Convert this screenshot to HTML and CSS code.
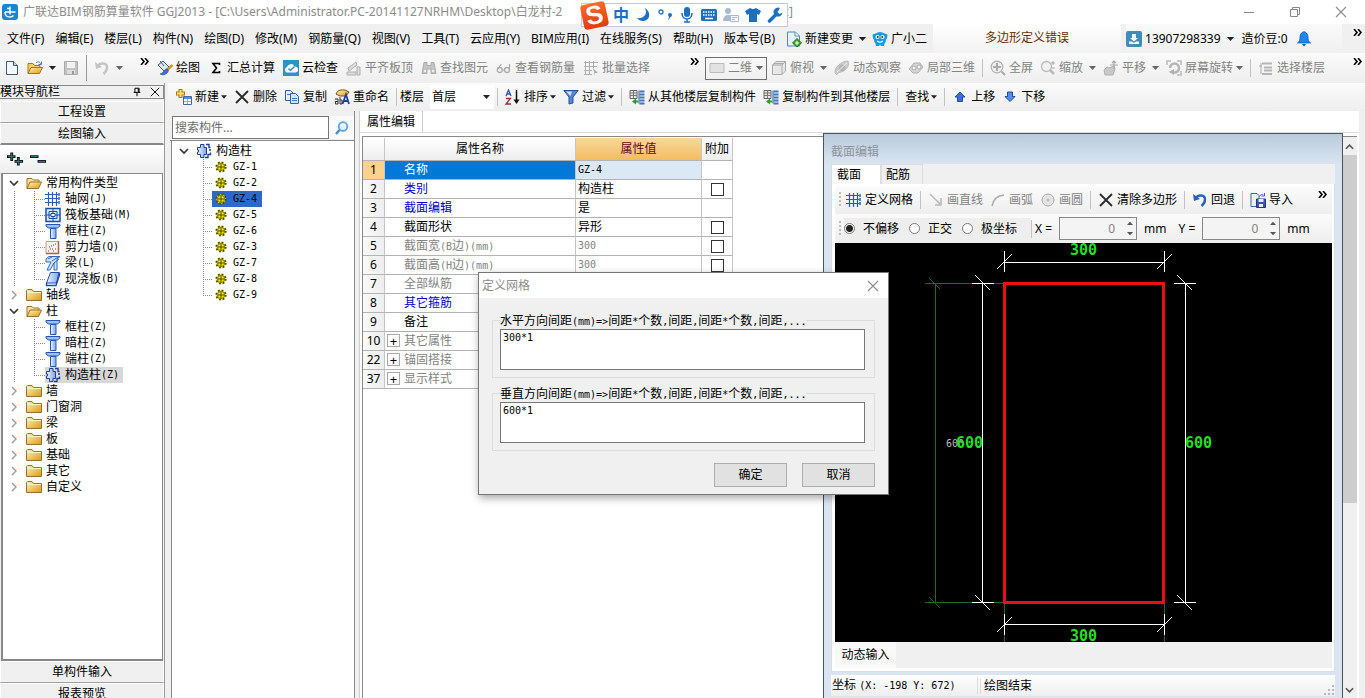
FILE: index.html
```html
<!DOCTYPE html>
<html lang="zh-CN">
<head>
<meta charset="utf-8">
<title>广联达BIM钢筋算量软件 GGJ2013</title>
<link rel="stylesheet" href="styles.css">
</head>
<body>
<svg class="defs" aria-hidden="true">
  <defs>
    <linearGradient id="gold" x1="0" y1="0" x2="1" y2="1"><stop offset="0" stop-color="#fff3b8"/><stop offset="1" stop-color="#dc9a18"/></linearGradient>
    <linearGradient id="steel" x1="0" y1="0" x2="1" y2="0"><stop offset="0" stop-color="#eef5ff"/><stop offset="1" stop-color="#7da4ea"/></linearGradient>
  </defs>
  <symbol id="caret" viewBox="0 0 7 4"><path d="M0 0h7L3.500 4z" fill="currentColor"/></symbol>
  <symbol id="more" viewBox="0 0 9 7"><path d="M1 0l3 3.500-3 3.500M5 0l3 3.500-3 3.500" fill="none" stroke="#000" stroke-width="1.600"/></symbol>
  <symbol id="new" viewBox="0 0 16 16"><path d="M2.500 1.500h7l4 4v9h-11z" fill="#f4f9ff" stroke="#41597c"/><path d="M9.500 1.500v4h4" fill="#c5d6ef" stroke="#41597c"/></symbol>
  <symbol id="open" viewBox="0 0 16 16"><path d="M1 13.500V3.500h5l1.500 2H13V8" fill="#f4cf63" stroke="#a87816"/><path d="M1 13.500L4 7.500h11.500L12.500 13.500z" fill="url(#gold)" stroke="#a87816"/><path d="M9 3c2-2 4-1 5 1M14.500 1.500v3h-3" fill="none" stroke="#4a78b8"/></symbol>
  <symbol id="save" viewBox="0 0 16 16"><path d="M1.500 1.500h13v13h-13z" fill="#c2c2c2" stroke="#aaa"/><path d="M4 2h8v6H4z" fill="#f1f1f1"/><path d="M4 10h8v4H4z" fill="#ddd"/><path d="M9 11h2v3H9z" fill="#999"/></symbol>
  <symbol id="undo" viewBox="0 0 16 16"><path d="M1 2l1 7 6-2z" fill="currentColor"/><path d="M4 6C6 2.500 13 2.500 13 7.500 13 10 12 12 9.500 14" fill="none" stroke="currentColor" stroke-width="2.400"/></symbol>
  <symbol id="paint" viewBox="0 0 16 16"><path d="M1 5l5-4 6 6-5 4z" fill="#dfe8f8" stroke="#41597c"/><path d="M3 1l4 5" stroke="#41597c"/><path d="M15.500 5L9 11" stroke="#c99a22" stroke-width="2.500"/><path d="M10 9c3 1 1 5-4 6l-3-1c4-1 3-4 7-5z" fill="#3f6fd0" stroke="#2a4a92" stroke-width=".6"/></symbol>
  <symbol id="sigma" viewBox="0 0 16 16"><path d="M11.500 5V3.500H5l3.500 4.500L5 12.500h6.500V11" fill="none" stroke="#000" stroke-width="1.600"/></symbol>
  <symbol id="cloud" viewBox="0 0 16 16"><path d="M0 0h16v16H0z" fill="#2f93c8"/><path d="M3.500 12.500a3 3 0 0 1 .5-5.500 4 4 0 0 1 7.500-.5 3 3 0 0 1 1 6z" fill="#fff"/><path d="M5.500 8.500l2 2 4-4" fill="none" stroke="#2f93c8" stroke-width="1.500"/></symbol>
  <symbol id="slab" viewBox="0 0 16 16"><path d="M2 8l8-6 1 3-8 6zM1 12h9v3H1zM11 7h3v8h-3z" fill="#ddd" stroke="#b0b0b0"/></symbol>
  <symbol id="binoc" viewBox="0 0 16 16"><path d="M3 2.500h3v3h4v-3h3l2 11h-5V9H6v4.500H1z" fill="#c4c4c4" stroke="#adadad"/><path d="M3 11h2M11 11h2" stroke="#eee" stroke-width="2"/></symbol>
  <symbol id="glasses" viewBox="0 0 16 16"><circle cx="3.800" cy="10" r="2.500" fill="none" stroke="#aaa" stroke-width="1.300"/><circle cx="11" cy="10" r="2.500" fill="none" stroke="#aaa" stroke-width="1.300"/><path d="M1.500 9l4-5M13.500 11V4M6.500 10h2" stroke="#aaa" stroke-width="1.200"/></symbol>
  <symbol id="batch" viewBox="0 0 16 16"><path d="M1 2.500h14M1 6.500h13M1 10.500h8M1 14.500h8M2.500 1v14M6.500 1v14M10.500 1v7" fill="none" stroke="#b0b0b0"/><path d="M10 8l5 5h-3v3z" fill="#aaa"/></symbol>
  <symbol id="flat" viewBox="0 0 16 16"><path d="M1 3.500h14v9H1z" fill="#e2e2e2" stroke="#bbb"/></symbol>
  <symbol id="cube" viewBox="0 0 16 16"><path d="M1.500 5l3.500-3.500h9.500V11L11 14.500H1.500z" fill="#e8e8e8" stroke="#aaa"/><path d="M1.500 5H11v9.500M11 5l3.500-3.500M3 3.500h9.500" fill="none" stroke="#aaa"/></symbol>
  <symbol id="orbit" viewBox="0 0 16 16"><path d="M1 13C0 8 7 1 14 1c2 4-1 9-7 11-3 1-4 1-4 3z" fill="#cdcdcd" stroke="#bbb"/><circle cx="8" cy="8" r="3.500" fill="#b5b5b5"/><path d="M3 12L13 3" stroke="#eee"/></symbol>
  <symbol id="part" viewBox="0 0 16 16"><path d="M1 9l5-6h6l3 4-5 6H5z" fill="#d5d5d5" stroke="#b0b0b0"/><circle cx="6" cy="8" r="2" fill="#f5f5f5" stroke="#aaa"/><circle cx="11" cy="7" r="2" fill="#f5f5f5" stroke="#aaa"/></symbol>
  <symbol id="full" viewBox="0 0 16 16"><circle cx="7" cy="7" r="5.800" fill="#eee" stroke="#b0b0b0" stroke-width="1.200"/><path d="M7 3v8M3 7h8M11.500 11.500l3.500 3.500" stroke="#aaa" stroke-width="2"/></symbol>
  <symbol id="zoomer" viewBox="0 0 16 16"><circle cx="6.500" cy="6.500" r="5" fill="#f2f2f2" stroke="#bbb" stroke-width="1.300"/><path d="M10 10l4 4" stroke="#bbb" stroke-width="2.500"/><path d="M11 3h4M13 1v4M12 8h3" stroke="#aaa"/></symbol>
  <symbol id="pan" viewBox="0 0 16 16"><path d="M2 15l-1-5 3-3 2 1 5-2 1 3-2 6z" fill="#c8c8c8" stroke="#b0b0b0"/><path d="M11 1v8M7 5h8M9 3l2-2 2 2" fill="none" stroke="#aaa" stroke-width="1.200"/></symbol>
  <symbol id="spin" viewBox="0 0 16 16"><path d="M1 5V1h4M11 1h4v4M15 11v4h-4" fill="none" stroke="#bbb" stroke-width="1.500"/><path d="M4 8a4.500 4.500 0 1 1 4 4.500" fill="none" stroke="#b5b5b5" stroke-width="2.500"/><path d="M8 9v6l-5-3z" fill="#b0b0b0"/></symbol>
  <symbol id="floors" viewBox="0 0 16 16"><path d="M4 3.500h10M6 7.500h8M6 10.500h8M4 14h10" stroke="#b5b5b5" stroke-width="2"/><path d="M1 6h3M3 3v11" stroke="#aaa"/></symbol>
  <symbol id="docplus" viewBox="0 0 16 16"><path d="M1.500 1h8l4 4v10h-12z" fill="#e6f2fc" stroke="#4f89bb"/><path d="M9 1v4h4" fill="#fff" stroke="#4f89bb"/><path d="M11 7.500l4.500 4.500-4.500 4-4.500-4z" fill="#3aa626" stroke="#227a18"/><path d="M11 10v4M9 12h4" stroke="#fff"/></symbol>
  <symbol id="mascot" viewBox="0 0 16 16"><path d="M.5 3.500l3-1q4.500-3 9 0l3 1-.5 4-1 1q0 3-1.500 4l-.5 2.500H9.500L8 14l-1.500 1H4l-.5-2.500Q2 11.500 2 8.500l-1-1z" fill="#179be0"/><circle cx="5.500" cy="6" r="2" fill="#fff"/><circle cx="10.500" cy="6" r="2" fill="#fff"/><circle cx="5.800" cy="6" r=".9" fill="#134"/><circle cx="10.200" cy="6" r=".9" fill="#134"/><path d="M5 10q3 2.500 6 0" fill="none" stroke="#fff" stroke-width="1.200"/></symbol>
  <symbol id="user" viewBox="0 0 16 16"><rect width="16" height="16" rx="2" fill="#3f8db8"/><path d="M6 3h4v4h2L8 10.500 4 7h2z" fill="#fff"/><path d="M3 13v-2.500h3l2 1.500 2-1.500h3V13z" fill="#fff"/></symbol>
  <symbol id="bell" viewBox="0 0 16 16"><path d="M8 .8c1.500 0 4 1.500 4 5.200 0 3 .5 4.500 2.500 6h-13C3.500 10.500 4 9 4 6 4 2.300 6.500.8 8 .8z" fill="#1e86f4" stroke="#104f9c" stroke-width=".7"/><path d="M6 13h4l-2 2.500z" fill="#104f9c"/></symbol>
  <symbol id="create" viewBox="0 0 16 16"><path d="M4.500 0v9M0 4.500h9" stroke="#a77b12" stroke-width="4"/><path d="M4.500 1v7M1 4.500h7" stroke="#ffe15a" stroke-width="2"/><path d="M7.500 7.500h8v8h-8z" fill="#fff" stroke="#4267ab"/><path d="M8 8h7v2H8z" fill="#5b8be0"/><path d="M8 12.500h7M11.500 10v5" stroke="#8caad8"/></symbol>
  <symbol id="cross" viewBox="0 0 16 16"><path d="M2 2l12 12M14 2L2 14" stroke="#2b2b2b" stroke-width="1.800"/></symbol>
  <symbol id="copy" viewBox="0 0 16 16"><path d="M1.500 1.500h5l3 3v7h-8z" fill="#e5efff" stroke="#345fae"/><path d="M6.500 4.500h5l3 3v7h-8z" fill="#d4e4ff" stroke="#345fae"/><path d="M8 9.500h5M8 11.500h5M3 5.500h3" stroke="#4a7ad0"/></symbol>
  <symbol id="rename" viewBox="0 0 16 16"><path d="M2 5c2-5 6-4 9-4l4 2-3 4H6z" fill="url(#gold)" stroke="#755110"/><path d="M8.500 15L12 5.500l3 9.500M9.500 12h5" fill="none" stroke="#1c449b" stroke-width="1.800"/><path d="M1 10h3v5H1.500v-2.500H4M6 8v7h2v-4H6" fill="none" stroke="#333"/></symbol>
  <symbol id="sort" viewBox="0 0 16 16"><path d="M1 7l2.500-6L6 7M2 5h3" fill="none" stroke="#2e56b0" stroke-width="1.300"/><path d="M1 9.500h4.500L1 15h5" fill="none" stroke="#a52a3c" stroke-width="1.300"/><path d="M11.500 1v11" stroke="#111" stroke-width="1.500"/><path d="M8.500 10.500h6l-3 4.500z" fill="#111"/></symbol>
  <symbol id="filter" viewBox="0 0 16 16"><path d="M.8 1.500h14.400L10 8v6l-4 1V8z" fill="#4f87de" stroke="#2451a0"/><path d="M3 2.500h6L7.500 7z" fill="#cfe1ff"/></symbol>
  <symbol id="floorcopy" viewBox="0 0 16 16"><path d="M1 1.500h7v8H1z" fill="#e8e8e8" stroke="#666"/><path d="M1 4h7M1 6.500h7M4.500 1v8" stroke="#777"/><path d="M10 1.500v13" stroke="#2c5f9e"/><path d="M10.500 2.500h5M10.500 5.500h5M10.500 8.500h5M10.500 11.500h5M10.500 14.500h5" stroke="#3c77bd" stroke-width="2"/><path d="M7 9.500L3 12.500l4 3v-2h2v-2H7z" fill="#20a03a"/></symbol>
  <symbol id="up" viewBox="0 0 12 16"><path d="M6 3l5 5H8.500v4.500h-5V8H1z" fill="#3c6fd8" stroke="#234a9e"/></symbol>
  <symbol id="down" viewBox="0 0 12 16"><path d="M6 12.500l5-5H8.500V3h-5v4.500H1z" fill="#5a8aec" stroke="#234a9e"/></symbol>
  <symbol id="folder-open" viewBox="0 0 16 16"><path d="M1 13.500V3.500h5l1.500 1.500H13V7" fill="#f9e29a" stroke="#9a7424"/><path d="M1 13.500L4 7h11.500L12.500 13.500z" fill="url(#gold)" stroke="#9a7424"/></symbol>
  <symbol id="folder" viewBox="0 0 16 16"><path d="M.5 13.500v-10l1-1H6L7.500 4.500h8v9z" fill="url(#gold)" stroke="#9a7424"/><path d="M1 5.500h14" stroke="#fff3c0"/></symbol>
  <symbol id="grid" viewBox="0 0 16 16"><path d="M0 3.500h15M0 7.500h15M0 11.500h15M3.500 1v14M7.500 1v14M11.500 1v14" stroke="#2a5bb8" stroke-width="1.200"/><path d="M13 2h2v3h-2zM13 6h2v3h-2zM13 10h2v3h-2z" fill="#5a86d8"/></symbol>
  <symbol id="raft" viewBox="0 0 16 16"><path d="M1 1.500h14v13H1z" fill="#dce8ff" stroke="#1d4dab" stroke-width="1.500"/><path d="M4 4.500h8v7H4zM8 1v14M1 8h14" fill="none" stroke="#1d4dab"/><path d="M6 6.500h4v3H6z" fill="#fff" stroke="#1d4dab"/></symbol>
  <symbol id="column" viewBox="0 0 16 16"><path d="M1 1.500h14v1.500L12.500 5h-9L1 3z" fill="#9fc0f5" stroke="#2456b4"/><path d="M5.500 5.500h5.500v10H5.500z" fill="url(#steel)" stroke="#2456b4"/></symbol>
  <symbol id="wall" viewBox="0 0 16 16"><path d="M1 2.500h12.500v12H1z" fill="#faf2ec" stroke="#c39a88"/><path d="M13.500 2v12.500H1" fill="none" stroke="#a9644a" stroke-width="1.500"/><path d="M4 8h1M8 6h1M5 10h1M10 10h1M3 12h1M8 12h1M10 5h1M6 7h1M7 10h1" stroke="#555"/></symbol>
  <symbol id="beam" viewBox="0 0 16 16"><path d="M1 4l3-2.500h11L12 4v11H9V8l-4 7H2l4-8H1z" fill="#cfe2ff" stroke="#2a6ac4"/><path d="M3 4l4-2M7 6l6-4M9 8l5-4" stroke="#2a6ac4"/></symbol>
  <symbol id="plate" viewBox="0 0 16 16"><path d="M5.500 1.500H14L11.500 12H1.500z" fill="url(#steel)" stroke="#1d4dab"/><path d="M1.500 12v2.500H11L14.500 4V1.500" fill="none" stroke="#1d4dab" stroke-width="1.400"/></symbol>
  <symbol id="tie" viewBox="0 0 16 16"><path d="M4.500 1.500H8v3h2.500v7H8v3H4.500v-3H1.500v-2.500h1v-2h-1v-2.500h3z" fill="url(#steel)" stroke="#1f408c"/><path d="M10 1.500h3v3h1.500M13 7h2M14.500 9.500v2H12v3H9" fill="none" stroke="#1f408c" stroke-width="1.400"/></symbol>
  <symbol id="gear" viewBox="0 0 12 12"><circle cx="6" cy="6" r="4.700" fill="#f2e800" stroke="#4b4a00" stroke-width="1.800" stroke-dasharray="1.850 1.841"/><circle cx="6" cy="6" r="3.600" fill="#f2e800" stroke="#5b5800" stroke-width=".7"/><path d="M6 3v6M3 6h6" stroke="#3b3a00" stroke-width=".9"/></symbol>
  <symbol id="lens" viewBox="0 0 16 16"><circle cx="9" cy="6.500" r="4.300" fill="#e6f4ff" stroke="#5ba3d8" stroke-width="1.700"/><path d="M5.500 10L2 14" stroke="#4a90c8" stroke-width="2.500"/></symbol>
  <symbol id="chev-open" viewBox="0 0 10 16"><path d="M1 6l4 4 4-4" fill="none" stroke="#333" stroke-width="1.600"/></symbol>
  <symbol id="chev" viewBox="0 0 10 16"><path d="M3 4l4 4-4 4" fill="none" stroke="#999" stroke-width="1.400"/></symbol>
  <symbol id="close" viewBox="0 0 12 12"><path d="M1 1l10 10M11 1L1 11" stroke="currentColor" stroke-width="1.100"/></symbol>
</svg>

<div class="app">
  <header class="titlebar">
    <svg class="logo" viewBox="0 0 16 16"><rect width="16" height="16" rx="3" fill="#1787d4"/><path d="M8 2.500v8M3 8h10.500M3 8v1a5 4.500 0 0 0 5 4 5 4.500 0 0 0 3.500-1.500M5 4.500h3" fill="none" stroke="#fff" stroke-width="1.400"/></svg>
    <h1>广联达BIM钢筋算量软件 GGJ2013 - [C:\Users\Administrator.PC-20141127NRHM\Desktop\白龙村-2</h1>
    <span class="title-tail">2]</span>
    <div class="win-buttons">
      <button aria-label="最小化"><svg viewBox="0 0 12 12"><path d="M1 6.500h10" stroke="#888"/></svg></button>
      <button aria-label="还原"><svg viewBox="0 0 12 12"><path d="M1.500 3.500h7v7h-7zM3.500 3.500v-2h7v7h-2" fill="none" stroke="#888"/></svg></button>
      <button aria-label="关闭"><svg viewBox="0 0 12 12"><use href="#close"/></svg></button>
    </div>
  </header>

  <nav class="menubar">
    <button>文件(F)</button><button>编辑(E)</button><button>楼层(L)</button><button>构件(N)</button><button>绘图(D)</button><button>修改(M)</button><button>钢筋量(Q)</button><button>视图(V)</button><button>工具(T)</button><button>云应用(Y)</button><button>BIM应用(I)</button><button>在线服务(S)</button><button>帮助(H)</button><button>版本号(B)</button>
    <button class="tool"><svg class="ic"><use href="#docplus"/></svg>新建变更<svg class="caret wide"><use href="#caret"/></svg></button>
    <button class="tool mascot"><svg class="ic"><use href="#mascot"/></svg>广小二</button>
    <div class="notice">多边形定义错误</div>
    <div class="account">
      <button class="tool"><svg class="ic"><use href="#user"/></svg>13907298339<svg class="caret wide"><use href="#caret"/></svg></button>
      <span>造价豆:0</span>
      <button aria-label="通知"><svg class="ic"><use href="#bell"/></svg></button>
    </div>
    <button class="more" aria-label="更多"><svg><use href="#more"/></svg></button>
  </nav>

  <div class="toolbar main-tools">
    <div class="group file-group">
      <button aria-label="新建"><svg class="ic"><use href="#new"/></svg></button>
      <button class="tool" aria-label="打开"><svg class="ic"><use href="#open"/></svg><svg class="caret wide"><use href="#caret"/></svg></button>
      <button aria-label="保存"><svg class="ic"><use href="#save"/></svg></button>
      <i class="sep"></i>
      <button class="tool off" aria-label="撤销"><svg class="ic pale"><use href="#undo"/></svg><svg class="caret wide"><use href="#caret"/></svg></button>
      <button class="more" aria-label="更多"><svg><use href="#more"/></svg></button>
    </div>
    <div class="group edit-group">
      <button class="tool"><svg class="ic"><use href="#paint"/></svg>绘图</button>
      <button class="tool"><svg class="ic"><use href="#sigma"/></svg>汇总计算</button>
      <button class="tool"><svg class="ic"><use href="#cloud"/></svg>云检查</button>
      <button class="tool off"><svg class="ic"><use href="#slab"/></svg>平齐板顶</button>
      <button class="tool off"><svg class="ic"><use href="#binoc"/></svg>查找图元</button>
      <button class="tool off"><svg class="ic"><use href="#glasses"/></svg>查看钢筋量</button>
      <button class="tool off"><svg class="ic"><use href="#batch"/></svg>批量选择</button>
      <button class="more" aria-label="更多"><svg><use href="#more"/></svg></button>
    </div>
    <div class="group view-group">
      <label class="view-combo"><svg class="ic"><use href="#flat"/></svg><select aria-label="视图" disabled><option>二维</option></select><svg class="caret"><use href="#caret"/></svg></label>
      <button class="tool off"><svg class="ic"><use href="#cube"/></svg>俯视<svg class="caret wide"><use href="#caret"/></svg></button>
      <button class="tool off"><svg class="ic"><use href="#orbit"/></svg>动态观察</button>
      <button class="tool off"><svg class="ic"><use href="#part"/></svg>局部三维</button>
      <i class="sep"></i>
      <button class="tool off"><svg class="ic"><use href="#full"/></svg>全屏</button>
      <button class="tool off"><svg class="ic"><use href="#zoomer"/></svg>缩放<svg class="caret wide"><use href="#caret"/></svg></button>
      <button class="tool off"><svg class="ic"><use href="#pan"/></svg>平移<svg class="caret wide"><use href="#caret"/></svg></button>
      <button class="tool off"><svg class="ic"><use href="#spin"/></svg>屏幕旋转<svg class="caret"><use href="#caret"/></svg></button>
      <i class="sep"></i>
      <button class="tool off"><svg class="ic"><use href="#floors"/></svg>选择楼层</button>
      <button class="more" aria-label="更多"><svg><use href="#more"/></svg></button>
    </div>
  </div>

  <div class="workspace">
    <aside class="nav-panel">
      <div class="nav-title"><span>模块导航栏</span>
        <button aria-label="固定"><svg viewBox="0 0 12 12"><path d="M3.500 6.500v-5h5v5M2 6.500h8M6 7v4M7.500 2v4" fill="none" stroke="#000" stroke-width="1.200"/></svg></button>
        <button aria-label="关闭"><svg viewBox="0 0 12 12"><use href="#close"/></svg></button>
      </div>
      <button class="nav-section">工程设置</button>
      <button class="nav-section active">绘图输入</button>
      <div class="nav-tools">
        <button aria-label="展开"><svg viewBox="0 0 18 16"><path d="M5 1v9M0 5.500h9M12 6v9M8 10.500h9" stroke="#111" stroke-width="3"/><path d="M5 2v7M1 5.500h7M12 7v7M9 10.500h7" stroke="#2a8a84"/></svg></button>
        <button aria-label="折叠"><svg viewBox="0 0 18 16"><path d="M0 5.500h9M8 10.500h9" stroke="#111" stroke-width="3"/><path d="M1 5.500h7M9 10.500h7" stroke="#2a8a84"/></svg></button>
      </div>
      <div class="nav-tree tree">
        <ul>
          <li class="branch open"><div class="node"><svg class="tog"><use href="#chev-open"/></svg><svg class="ic"><use href="#folder-open"/></svg>常用构件类型</div>
            <ul>
              <li><svg class="ic"><use href="#grid"/></svg>轴网<span class="m">(J)</span></li>
              <li><svg class="ic"><use href="#raft"/></svg>筏板基础<span class="m">(M)</span></li>
              <li><svg class="ic"><use href="#column"/></svg>框柱<span class="m">(Z)</span></li>
              <li><svg class="ic"><use href="#wall"/></svg>剪力墙<span class="m">(Q)</span></li>
              <li><svg class="ic"><use href="#beam"/></svg>梁<span class="m">(L)</span></li>
              <li><svg class="ic"><use href="#plate"/></svg>现浇板<span class="m">(B)</span></li>
            </ul></li>
          <li class="branch"><div class="node"><svg class="tog"><use href="#chev"/></svg><svg class="ic"><use href="#folder"/></svg>轴线</div></li>
          <li class="branch open"><div class="node"><svg class="tog"><use href="#chev-open"/></svg><svg class="ic"><use href="#folder-open"/></svg>柱</div>
            <ul>
              <li><svg class="ic"><use href="#column"/></svg>框柱<span class="m">(Z)</span></li>
              <li><svg class="ic"><use href="#column"/></svg>暗柱<span class="m">(Z)</span></li>
              <li><svg class="ic"><use href="#column"/></svg>端柱<span class="m">(Z)</span></li>
              <li><span class="picked"><svg class="ic"><use href="#tie"/></svg>构造柱<span class="m">(Z)</span></span></li>
            </ul></li>
          <li class="branch"><div class="node"><svg class="tog"><use href="#chev"/></svg><svg class="ic"><use href="#folder"/></svg>墙</div></li>
          <li class="branch"><div class="node"><svg class="tog"><use href="#chev"/></svg><svg class="ic"><use href="#folder"/></svg>门窗洞</div></li>
          <li class="branch"><div class="node"><svg class="tog"><use href="#chev"/></svg><svg class="ic"><use href="#folder"/></svg>梁</div></li>
          <li class="branch"><div class="node"><svg class="tog"><use href="#chev"/></svg><svg class="ic"><use href="#folder"/></svg>板</div></li>
          <li class="branch"><div class="node"><svg class="tog"><use href="#chev"/></svg><svg class="ic"><use href="#folder"/></svg>基础</div></li>
          <li class="branch"><div class="node"><svg class="tog"><use href="#chev"/></svg><svg class="ic"><use href="#folder"/></svg>其它</div></li>
          <li class="branch"><div class="node"><svg class="tog"><use href="#chev"/></svg><svg class="ic"><use href="#folder"/></svg>自定义</div></li>
        </ul>
      </div>
      <button class="nav-section">单构件输入</button>
      <button class="nav-section last">报表预览</button>
    </aside>

    <main class="content">
      <div class="toolbar item-tools">
        <button class="tool"><svg class="ic"><use href="#create"/></svg>新建<svg class="caret"><use href="#caret"/></svg></button>
        <button class="tool"><svg class="ic"><use href="#cross"/></svg>删除</button>
        <button class="tool"><svg class="ic"><use href="#copy"/></svg>复制</button>
        <button class="tool"><svg class="ic"><use href="#rename"/></svg>重命名</button>
        <label class="floor"><i class="sep"></i>楼层 <span class="floor-combo"><select><option>首层</option></select><svg class="caret"><use href="#caret"/></svg></span><i class="sep"></i></label>
        <button class="tool"><svg class="ic"><use href="#sort"/></svg>排序<svg class="caret"><use href="#caret"/></svg></button>
        <button class="tool"><svg class="ic"><use href="#filter"/></svg>过滤<svg class="caret"><use href="#caret"/></svg></button>
        <i class="sep"></i>
        <button class="tool"><svg class="ic"><use href="#floorcopy"/></svg>从其他楼层复制构件</button>
        <button class="tool"><svg class="ic"><use href="#floorcopy"/></svg>复制构件到其他楼层</button>
        <i class="sep"></i>
        <button class="tool">查找<svg class="caret"><use href="#caret"/></svg></button>
        <i class="sep"></i>
        <button class="tool"><svg class="ic"><use href="#up"/></svg>上移</button>
        <button class="tool"><svg class="ic"><use href="#down"/></svg>下移</button>
      </div>

      <div class="panes">
        <section class="member-panel">
          <form class="search"><input type="text" placeholder="搜索构件..." aria-label="搜索构件"><button type="button" aria-label="搜索"><svg class="ic"><use href="#lens"/></svg></button></form>
          <div class="member-tree tree">
            <div class="node"><svg class="tog"><use href="#chev-open"/></svg><svg class="ic"><use href="#tie"/></svg>构造柱</div>
            <ul class="m">
              <li><span><svg class="gear"><use href="#gear"/></svg>GZ-1</span></li>
              <li><span><svg class="gear"><use href="#gear"/></svg>GZ-2</span></li>
              <li><span class="selected"><svg class="gear"><use href="#gear"/></svg>GZ-4</span></li>
              <li><span><svg class="gear"><use href="#gear"/></svg>GZ-5</span></li>
              <li><span><svg class="gear"><use href="#gear"/></svg>GZ-6</span></li>
              <li><span><svg class="gear"><use href="#gear"/></svg>GZ-3</span></li>
              <li><span><svg class="gear"><use href="#gear"/></svg>GZ-7</span></li>
              <li><span><svg class="gear"><use href="#gear"/></svg>GZ-8</span></li>
              <li><span><svg class="gear"><use href="#gear"/></svg>GZ-9</span></li>
            </ul>
          </div>
        </section>

        <section class="props">
          <div class="prop-tabs"><button>属性编辑</button></div>
          <div class="prop-body">
            <div class="prop-grid">
              <table>
                <colgroup><col class="c-no"><col class="c-name"><col class="c-value"><col class="c-add"></colgroup>
                <thead><tr><th></th><th>属性名称</th><th class="hot">属性值</th><th>附加</th></tr></thead>
                <tbody>
                  <tr class="current"><th>1</th><td>名称</td><td class="m">GZ-4</td><td></td></tr>
                  <tr class="key"><th>2</th><td>类别</td><td>构造柱</td><td><input type="checkbox" aria-label="附加 类别"></td></tr>
                  <tr class="key"><th>3</th><td>截面编辑</td><td>是</td><td></td></tr>
                  <tr><th>4</th><td>截面形状</td><td>异形</td><td><input type="checkbox" aria-label="附加 截面形状"></td></tr>
                  <tr class="dim"><th>5</th><td>截面宽<span class="m">(B</span>边<span class="m">)(mm)</span></td><td class="m">300</td><td><input type="checkbox" aria-label="附加 截面宽"></td></tr>
                  <tr class="dim"><th>6</th><td>截面高<span class="m">(H</span>边<span class="m">)(mm)</span></td><td class="m">300</td><td><input type="checkbox" aria-label="附加 截面高"></td></tr>
                  <tr class="dim"><th>7</th><td>全部纵筋</td><td></td><td></td></tr>
                  <tr class="key"><th>8</th><td>其它箍筋</td><td></td><td></td></tr>
                  <tr><th>9</th><td>备注</td><td></td><td></td></tr>
                  <tr class="dim fold"><th>10</th><td><button aria-label="展开">+</button>其它属性</td><td></td><td></td></tr>
                  <tr class="dim fold"><th>22</th><td><button aria-label="展开">+</button>锚固搭接</td><td></td><td></td></tr>
                  <tr class="dim fold"><th>37</th><td><button aria-label="展开">+</button>显示样式</td><td></td><td></td></tr>
                </tbody>
              </table>
            </div>
            <div class="scrollbar">
              <svg viewBox="0 0 10 10"><path d="M1 7l4-4 4 4" fill="none" stroke="#555" stroke-width="1.800"/></svg>
              <div class="thumb"></div>
              <svg viewBox="0 0 10 10"><path d="M1 3l4 4 4-4" fill="none" stroke="#555" stroke-width="1.800"/></svg>
            </div>
          </div>
        </section>
      </div>
    </main>
  </div>

  <section class="section-window">
    <h2>截面编辑</h2>
    <div class="section-tabs"><button class="on">截面</button><button>配筋</button></div>
    <div class="section-pane">
      <div class="toolbar section-tools">
        <i class="grip"></i>
        <button class="tool"><svg class="ic"><use href="#grid"/></svg>定义网格</button>
        <i class="sep"></i>
        <button class="tool off"><svg class="ic" viewBox="0 0 16 16"><path d="M2 2l10 10M13 6v7H7" fill="none" stroke="#bbb" stroke-width="1.500"/></svg>画直线</button>
        <button class="tool off"><svg class="ic" viewBox="0 0 16 16"><path d="M2 14Q4 4 14 3" fill="none" stroke="#aaa" stroke-width="1.500"/></svg>画弧</button>
        <button class="tool off"><svg class="ic" viewBox="0 0 16 16"><circle cx="8" cy="8" r="6" fill="#e4e4e4" stroke="#aaa"/><circle cx="8" cy="8" r="1.500" fill="#bbb"/></svg>画圆</button>
        <i class="sep"></i>
        <button class="tool"><svg class="ic"><use href="#cross"/></svg>清除多边形</button>
        <i class="sep"></i>
        <button class="tool"><svg class="ic blue"><use href="#undo"/></svg>回退</button>
        <i class="sep"></i>
        <button class="tool"><svg class="ic" viewBox="0 0 16 16"><path d="M1 1.500h6l2 2v11H1z" fill="#eaf1ff" stroke="#41679f"/><path d="M6.500 7h9v8.500h-9z" fill="#3c55a8" stroke="#26366e"/><path d="M8.500 7h5v3h-5zM9 12h4v3H9z" fill="#e8ecf8"/><path d="M9.500 4.500c1-2 2.500-2.500 4-1.500M14.500 1v3h-3" fill="none" stroke="#41679f"/></svg>导入</button>
        <button class="more" aria-label="更多"><svg><use href="#more"/></svg></button>
      </div>
      <div class="toolbar offset-tools">
        <i class="grip"></i>
        <div class="radios">
          <label><input type="radio" name="offset" checked>不偏移</label>
          <label><input type="radio" name="offset">正交</label>
          <label><input type="radio" name="offset">极坐标</label>
        </div>
        <i class="sep"></i>
        <label class="coord">X = <span class="spin"><input type="text" value="0"><svg viewBox="0 0 7 16"><path d="M0 4l3.500-4L7 4zM0 12h7l-3.500 4z" fill="#555"/></svg></span> mm</label>
        <label class="coord">Y = <span class="spin"><input type="text" value="0"><svg viewBox="0 0 7 16"><path d="M0 4l3.500-4L7 4zM0 12h7l-3.500 4z" fill="#555"/></svg></span> mm</label>
      </div>
      <div class="canvas">
        <svg viewBox="0 0 497 399">
          <g fill="none" stroke="#1c6b28" shape-rendering="crispEdges">
            <path d="M100.500 40v320M90 40.500h80M90 359.500h80M169.500 360v39M329.500 360v39"/>
          </g>
          <path d="M94 35l11 11M94 354l11 11" stroke="#1c6b28"/>
          <g fill="none" stroke="#fff" shape-rendering="crispEdges">
            <path d="M169.500 19.500h160M169.500 8v21M329.500 8v21"/>
            <path d="M169.500 381.500h160M169.500 371v21M329.500 371v21"/>
            <path d="M147.500 40.500v319M137 40.500h22M137 359.500h22"/>
            <path d="M350.500 40.500v319M339 40.500h22M339 359.500h22"/>
          </g>
          <path d="M162 26l15-15M322 26l15-15M162 389l15-15M322 389l15-15M140 32l15 15M140 352l15 15M342 32l15 15M342 352l15 15" stroke="#fff"/>
          <path d="M169.500 40.500h159v319h-159z" fill="none" stroke="#ee1010" stroke-width="3"/>
          <text class="thin" x="111" y="204">600</text>
          <g class="dims"><text x="235" y="12">300</text><text x="235" y="398">300</text><text x="121" y="205">600</text><text x="350" y="205">600</text></g>
        </svg>
      </div>
      <div class="dynamic"><button>动态输入</button></div>
    </div>
    <footer class="status"><span>坐标 <span class="m">(X: -198 Y: 672)</span></span><span>绘图结束</span>
      <svg viewBox="0 0 12 12"><path d="M9 1h2v2H9zM5 5h2v2H5zM9 5h2v2H9zM1 9h2v2H1zM5 9h2v2H5zM9 9h2v2H9z" fill="#b8b8b8"/></svg></footer>
  </section>

  <section class="dialog" role="dialog" aria-labelledby="dlg-title">
    <header><h2 id="dlg-title">定义网格</h2><button aria-label="关闭"><svg viewBox="0 0 12 12"><use href="#close"/></svg></button></header>
    <form>
      <fieldset>
        <legend>水平方向间距<span class="m">(mm)=&gt;</span>间距<span class="m">*</span>个数<span class="m">,</span>间距<span class="m">,</span>间距<span class="m">*</span>个数<span class="m">,</span>间距<span class="m">,...</span></legend>
        <textarea class="m" aria-label="水平方向间距">300*1</textarea>
      </fieldset>
      <fieldset>
        <legend>垂直方向间距<span class="m">(mm)=&gt;</span>间距<span class="m">*</span>个数<span class="m">,</span>间距<span class="m">,</span>间距<span class="m">*</span>个数<span class="m">,</span>间距<span class="m">,...</span></legend>
        <textarea class="m" aria-label="垂直方向间距">600*1</textarea>
      </fieldset>
      <div class="actions"><button type="button">确定</button><button type="button">取消</button></div>
    </form>
  </section>

  <div class="ime">
    <span class="ime-logo">S</span>
    <span class="ime-lang">中</span>
    <svg viewBox="0 0 16 16"><path d="M10 1c3 6-1 11-8 10 3 4 10 4 12-1 1-4-1-7-4-9z" fill="#1d6fc0"/></svg>
    <svg viewBox="0 0 16 16"><circle cx="4" cy="5" r="2" fill="none" stroke="#1d6fc0" stroke-width="1.300"/><path d="M11 8a2 2 0 1 1 2.500 2L11 13.500l1-3.500z" fill="#1d6fc0"/></svg>
    <svg viewBox="0 0 16 16"><rect x="5" y="0" width="6" height="10" rx="3" fill="#1d6fc0"/><path d="M3 6c0 8 10 8 10 0M8 12v3M5 15h6" fill="none" stroke="#1d6fc0" stroke-width="1.500"/></svg>
    <svg viewBox="0 0 16 16"><rect y="2" width="16" height="12" rx="1.500" fill="#1d6fc0"/><path d="M2 5h12M2 8h12" stroke="#fff" stroke-width="1.500" stroke-dasharray="1.500 1"/><path d="M4 11.500h8" stroke="#fff" stroke-width="1.500"/></svg>
    <svg viewBox="0 0 16 16"><circle cx="5" cy="4" r="3" fill="#a9b9d2"/><path d="M0 14c0-7 8-8 9-4v4z" fill="#a9b9d2"/><path d="M7.500 8.500h8v6h-8z" fill="#fff" stroke="#a9b9d2"/><path d="M9 10.500h5M9 12.500h3" stroke="#a9b9d2"/></svg>
    <svg viewBox="0 0 16 16"><path d="M5 1q3 2 6 0l5 3-2 4-2-1v8H4V7L2 8 0 4z" fill="#1d6fc0"/></svg>
    <svg viewBox="0 0 16 16"><path d="M2.500 14L9 7.500" stroke="#1d6fc0" stroke-width="3.500" stroke-linecap="round"/><path d="M13 1a4.500 4.500 0 1 0 2.500 4.500l-3 1.500-2-2z" fill="#1d6fc0"/></svg>
  </div>
</div>
</body>
</html>
```

FILE: styles.css
```css
* { box-sizing: border-box; }
html, body { height: 100%; }
body {
  margin: 0;
  overflow: hidden;
  background: #f0f0f0;
  color: #000;
  font: 12px/16px "Noto Sans", "Noto Sans CJK SC", sans-serif;
}
button, input, select, textarea { font: inherit; color: inherit; margin: 0; }
button { background: none; border: 0; padding: 0; white-space: nowrap; display: flex; align-items: center; justify-content: center; }
h1, h2 { font: inherit; margin: 0; }
ul { list-style: none; margin: 0; padding: 0; }
svg { display: block; flex: none; }
select { appearance: none; border: 0; background: none; padding: 0; opacity: 1; }
.defs { position: absolute; width: 0; height: 0; }
.ic { width: 16px; height: 16px; }
.m { font-family: "DejaVu Sans Mono", "Noto Sans CJK SC", monospace; font-size: 10px; }

.app { position: relative; height: 100vh; display: flex; flex-direction: column; }

/* title bar */
.titlebar { flex: none; height: 24px; display: flex; align-items: center; background: #fff; color: #8c8c8c; padding: 0 18px 0 2px; white-space: nowrap; }
.logo { width: 16px; height: 16px; }
.titlebar h1 { width: 586px; margin-left: 5px; overflow: hidden; }
.title-tail { width: 184px; text-align: right; }
.win-buttons { margin-left: auto; display: flex; gap: 34px; }
.win-buttons svg { width: 12px; height: 12px; }

/* menu bar */
.menubar { flex: none; height: 29px; display: flex; align-items: center; gap: 11px; padding: 0 3px 0 7px; background: #f0f0f0; white-space: nowrap; }
.tool { gap: 3px; }
.off { color: #838383; }
.caret { width: 7px; height: 4px; color: #222; }
.off .caret, .view-combo .caret { color: #666; }
.caret.wide { margin-left: 3px; }
.pale { color: #c4c4c4; }
.blue { color: #2a63b8; }
.more { width: 9px; height: 100%; margin-left: auto; align-items: flex-start; padding-top: 5px; }
.more svg { width: 9px; height: 7px; }
.menubar .mascot { margin-left: -5px; }
.notice { flex: 0 0 188px; height: 29px; margin-left: -5px; line-height: 28px; text-align: center; color: #6a3000; background: linear-gradient(#fff, #f2f2f2); }
.account { flex: 1; height: 29px; display: flex; align-items: center; gap: 8px; background: linear-gradient(#fafafa, #f0f0f0); margin-left: -6px; }

/* tool bars */
.toolbar { display: flex; align-items: center; white-space: nowrap; background: linear-gradient(#fbfbfb, #eee); }
.sep { flex: none; width: 1px; height: 18px; background: #c2c2c2; }
.main-tools { flex: none; height: 30px; }
.group { display: flex; align-items: center; height: 100%; gap: 8px; }
.file-group { flex: 0 0 157px; gap: 7px; padding: 0 8px 0 4px; }
.file-group .sep { height: 26px; background: #999; }
.edit-group { flex: 0 0 548px; padding-right: 6px; }
.view-group { flex: 1; gap: 7px; padding-right: 3px; }
.view-combo { width: 62px; height: 23px; display: flex; align-items: center; gap: 3px; padding: 0 3px; border: 1px solid #6e6e6e; }
.view-combo select { flex: 1; min-width: 0; color: #838383; }
.view-group .view-combo + .tool { margin-left: -3px; }

.workspace { flex: 1; min-height: 0; display: flex; }

/* module navigation */
.nav-panel { flex: 0 0 165px; display: flex; flex-direction: column; padding-top: 2px; border-right: 1px solid #999; }
.nav-title { flex: none; height: 14px; display: flex; align-items: center; gap: 6px; padding-right: 2px; border: 1px solid #888; border-left: 0; margin-bottom: 2px; }
.nav-title span { flex: 1; line-height: 12px; }
.nav-title svg { width: 12px; height: 10px; }
.nav-section { flex: none; width: 100%; height: 22px; border: 1px solid #fff; border-bottom-color: #a0a0a0; background: #f0f0f0; }
.nav-section.active { border-bottom: 2px solid #888; }
.nav-section.last { height: 15px; padding-top: 6px; border-bottom: 0; overflow: hidden; }
.nav-tools { flex: none; height: 28px; display: flex; align-items: center; gap: 6px; padding-left: 7px; background: linear-gradient(#fff, #eee); }
.nav-tools svg { width: 17px; height: 16px; }
.nav-tree { flex: 1; min-height: 0; margin: 0 1px; padding: 1px 6px; border: 2px solid #888; border-width: 1px 1px 2px 2px; background: #fff; overflow: hidden; }

.node, .tree li li, .member-tree li { display: flex; align-items: center; height: 16px; white-space: nowrap; }
.tog { width: 10px; height: 16px; }
.node .ic { margin: 0 4px 0 7px; }
.tree ul ul { margin-left: 25px; }
.member-tree ul { margin-left: 24px; }
.tree li li::before, .member-tree li::before {
  content: ""; flex: none; width: 11px; height: 16px;
  background:
    repeating-linear-gradient(#888 0 1px, transparent 1px 2px) 0 0 / 1px 100% no-repeat,
    repeating-linear-gradient(90deg, #888 0 1px, transparent 1px 2px) 0 8px / 100% 1px no-repeat;
}
.tree li li:last-child::before, .member-tree li:last-child::before { background-size: 1px 8px, 100% 1px; }
.member-tree li::before { width: 9px; }
.nav-tree .open { background: repeating-linear-gradient(#888 0 1px, transparent 1px 2px) 5px 16px / 1px 100% no-repeat; }
.nav-tree li li .ic { margin-right: 4px; }
.picked { display: flex; align-items: center; background: #d8d8d8; padding-right: 4px; }

/* content */
.content { flex: 1; min-width: 0; display: flex; flex-direction: column; }
.item-tools { flex: none; height: 28px; gap: 7px; padding-left: 8px; margin-left: 3px; }
.item-tools .tool .caret { width: 6px; margin-left: -1px; }
.floor { display: flex; align-items: center; gap: 3px; }
.floor-combo { width: 64px; height: 24px; margin-left: 3px; padding: 0 4px 0 2px; display: flex; align-items: center; background: #fff; }
.floor-combo select { flex: 1; min-width: 0; }
.panes { flex: 1; min-height: 0; display: flex; }
.member-panel { flex: 0 0 185px; min-width: 0; margin-left: 5px; display: flex; flex-direction: column; border-right: 1px solid #888; padding-top: 4px; }
.search { flex: none; display: flex; height: 26px; padding: 1px 0 1px 2px; border-bottom: 1px solid #888; }
.search input { flex: 1; min-width: 0; border: 1px solid #777; background: #fff; padding: 0 2px; }
.search input::placeholder { color: #6d6d6d; }
.search button { width: 25px; background: #fafafa; }
.member-tree { flex: 1; min-height: 0; margin-left: 1px; padding: 2px 7px; border-left: 1px solid #888; background: #fff; }
.member-tree li span { display: flex; align-items: center; gap: 6px; height: 16px; padding: 0 5px 0 3px; }
.gear { width: 12px; height: 12px; }
.member-tree .selected { background: #2f69c8; }

/* property editor */
.props { flex: 1; min-width: 0; margin-left: 4px; display: flex; flex-direction: column; background: #fff; border-right: 6px solid #f0f0f0; border-left: 1px solid #ccc; }
.prop-tabs { flex: none; height: 22px; border-bottom: 1px solid #ddd; display: flex; }
.prop-tabs button { width: 63px; border-right: 1px solid #ccc; background: #fff; }
.prop-body { flex: 1; min-height: 0; margin: 3px 2px 0 2px; border-top: 1px solid #888; border-left: 1px solid #888; display: flex; }
.prop-grid { flex: 1; min-width: 0; overflow: hidden; padding-top: 1px; }
.prop-grid table { table-layout: fixed; width: 370px; border-collapse: separate; border-spacing: 0; }
.c-no { width: 22px; }
.c-name { width: 191px; }
.c-value { width: 126px; }
.c-add { width: 31px; }
.prop-grid th, .prop-grid td { height: 19px; padding: 0; font-weight: normal; line-height: 16px; border-right: 1px solid #c6c6c6; border-bottom: 1px solid #b4b4b4; white-space: nowrap; }
.prop-grid thead th { height: 23px; background: linear-gradient(#fff, #eee); }
.prop-grid thead .hot { background: linear-gradient(#f9d79c, #f2bd60); color: #6c0030; }
.prop-grid tbody th { background: linear-gradient(90deg, #fafafa, #eee); }
.prop-grid td:nth-child(2) { padding-left: 19px; }
.prop-grid td:nth-child(3) { padding-left: 2px; }
.prop-grid td input { appearance: none; display: block; width: 13px; height: 13px; margin: auto; border: 1px solid #333; background: #fff; }
.prop-grid .current th { background: #fdd28c; }
.current td:nth-child(2) { background: #0078d7; color: #fff; }
.current td:nth-child(3) { background: #dbe9f7; }
.key td:nth-child(2) { color: #0000d0; }
.dim td { color: #838383; }
.prop-grid .fold td:nth-child(2) { padding-left: 2px; }
.fold button { display: inline-flex; width: 13px; height: 13px; margin: 1px 4px 0 0; border: 1px solid #aaa; color: #000; font-size: 13px; line-height: 10px; vertical-align: top; }
.scrollbar { flex: none; width: 15px; display: flex; flex-direction: column; align-items: center; padding: 5px 0 3px; background: #f0f0f0; }
.scrollbar svg { width: 9px; height: 10px; }
.thumb { width: 15px; height: 348px; margin: 3px 0 auto; background: #cdcdcd; }

/* section editor window */
.section-window { position: absolute; left: 823px; right: 22px; top: 133px; bottom: 0; display: flex; flex-direction: column; padding: 0 7px 2px 7px; border: 1px solid #4a545e; border-bottom: 0; background: linear-gradient(#b9cbdc, #dbe5f1 31px); }
.section-window h2 { flex: none; height: 30px; padding-top: 10px; color: #8c949c; }
.section-tabs { flex: none; display: flex; height: 20px; background: #f0f0f0; }
.section-tabs button { width: 42px; padding-right: 8px; border: 1px solid #ddd; border-bottom: 0; }
.section-tabs .on { width: 50px; padding-right: 14px; background: #fff; }
.section-pane { flex: 1; min-height: 0; display: flex; flex-direction: column; padding: 2px 2px 3px 3px; border: 1px solid #ddd; border-top: 0; background: #fff; }
.section-tools { flex: none; height: 28px; gap: 7px; padding: 0 5px 0 4px; }
.grip { flex: none; width: 2px; height: 16px; background: repeating-linear-gradient(#bbb 0 2px, transparent 2px 4px); }
.section-tools .grip { margin-right: -2px; }
.offset-tools { flex: none; height: 29px; padding-left: 4px; }
.radios { display: flex; align-items: center; gap: 10px; height: 22px; margin-left: 3px; padding-right: 14px; background: #eee; }
.radios label { display: flex; align-items: center; gap: 8px; }
.radios input { appearance: none; width: 11px; height: 11px; border: 1px solid #777; border-radius: 50%; background: #fff; }
.radios input:checked { background: radial-gradient(#222 0 3px, #fff 4px); }
.coord { display: flex; align-items: center; gap: 7px; margin-left: 3px; }
.coord + .coord { margin-left: 12px; }
.spin { display: flex; align-items: center; width: 78px; height: 23px; padding-right: 3px; border: 1px solid #888; background: #f4f4f4; }
.spin input { flex: 1; min-width: 0; padding: 0 12px 0 0; border: 0; background: none; color: #838383; text-align: right; }
.spin svg { width: 6px; height: 15px; }
.canvas { flex: 1; min-height: 0; background: #000; }
.canvas svg { width: 100%; height: 100%; }
.dims { fill: #22dd22; font: bold 15px "DejaVu Sans Mono", monospace; }
.thin { fill: #bbb; font: 10px "DejaVu Sans Mono", monospace; }
.dynamic { flex: none; height: 26px; display: flex; background: #f0f0f0; }
.dynamic button { width: 61px; background: #f9f9f9; }
.status { flex: none; display: flex; align-items: center; height: 21px; margin-top: 3px; background: linear-gradient(#fff, #eee); }
.status > span { flex: 1; padding-left: 3px; border-left: 1px solid #ddd; }
.status > span:first-child { flex: 0 0 147px; padding-left: 1px; border: 0; border-right: 1px solid #ddd; margin-right: 2px; white-space: nowrap; }
.status svg { width: 12px; height: 12px; align-self: flex-end; }

/* grid dialog */
.dialog { position: absolute; left: 478px; top: 272px; width: 411px; background: #f0f0f0; border: 1px solid #777; box-shadow: 1px 3px 8px rgba(0, 0, 0, .35); }
.dialog header { display: flex; align-items: center; justify-content: space-between; height: 25px; padding: 0 9px 0 3px; background: #fff; color: #8c8c8c; }
.dialog header svg { width: 12px; height: 12px; }
.dialog form { padding: 15px 13px 7px; }
.dialog fieldset { min-width: 0; margin: 0 0 8px; padding: 1px 9px 7px 7px; border: 1px solid #dcdcdc; }
.dialog legend { height: 15px; padding: 0; white-space: nowrap; line-height: 15px; }
.dialog textarea { display: block; width: 100%; height: 41px; padding: 1px 2px; resize: none; border: 1px solid #777; background: #fff; line-height: 14px; }
.actions { display: flex; justify-content: flex-end; gap: 15px; padding-top: 4px; }
.actions button { width: 73px; height: 24px; border: 1px solid #adadad; background: #e1e1e1; }

/* input method bar */
.ime { position: absolute; left: 581px; top: 3px; display: flex; align-items: center; gap: 6px; height: 24px; padding-right: 4px; border: 1px solid #c0cbdc; background: #fff; color: #1d6fc0; }
.ime svg { width: 16px; height: 16px; }
.ime-logo { width: 25px; height: 25px; border-radius: 4px; background: linear-gradient(#ff6a2c, #e03c10); color: #fff; font: bold 26px/25px "Liberation Sans", sans-serif; text-align: center; transform: rotate(-12deg); }
.ime-lang { width: 16px; font-size: 16px; font-weight: bold; text-align: center; }
```
